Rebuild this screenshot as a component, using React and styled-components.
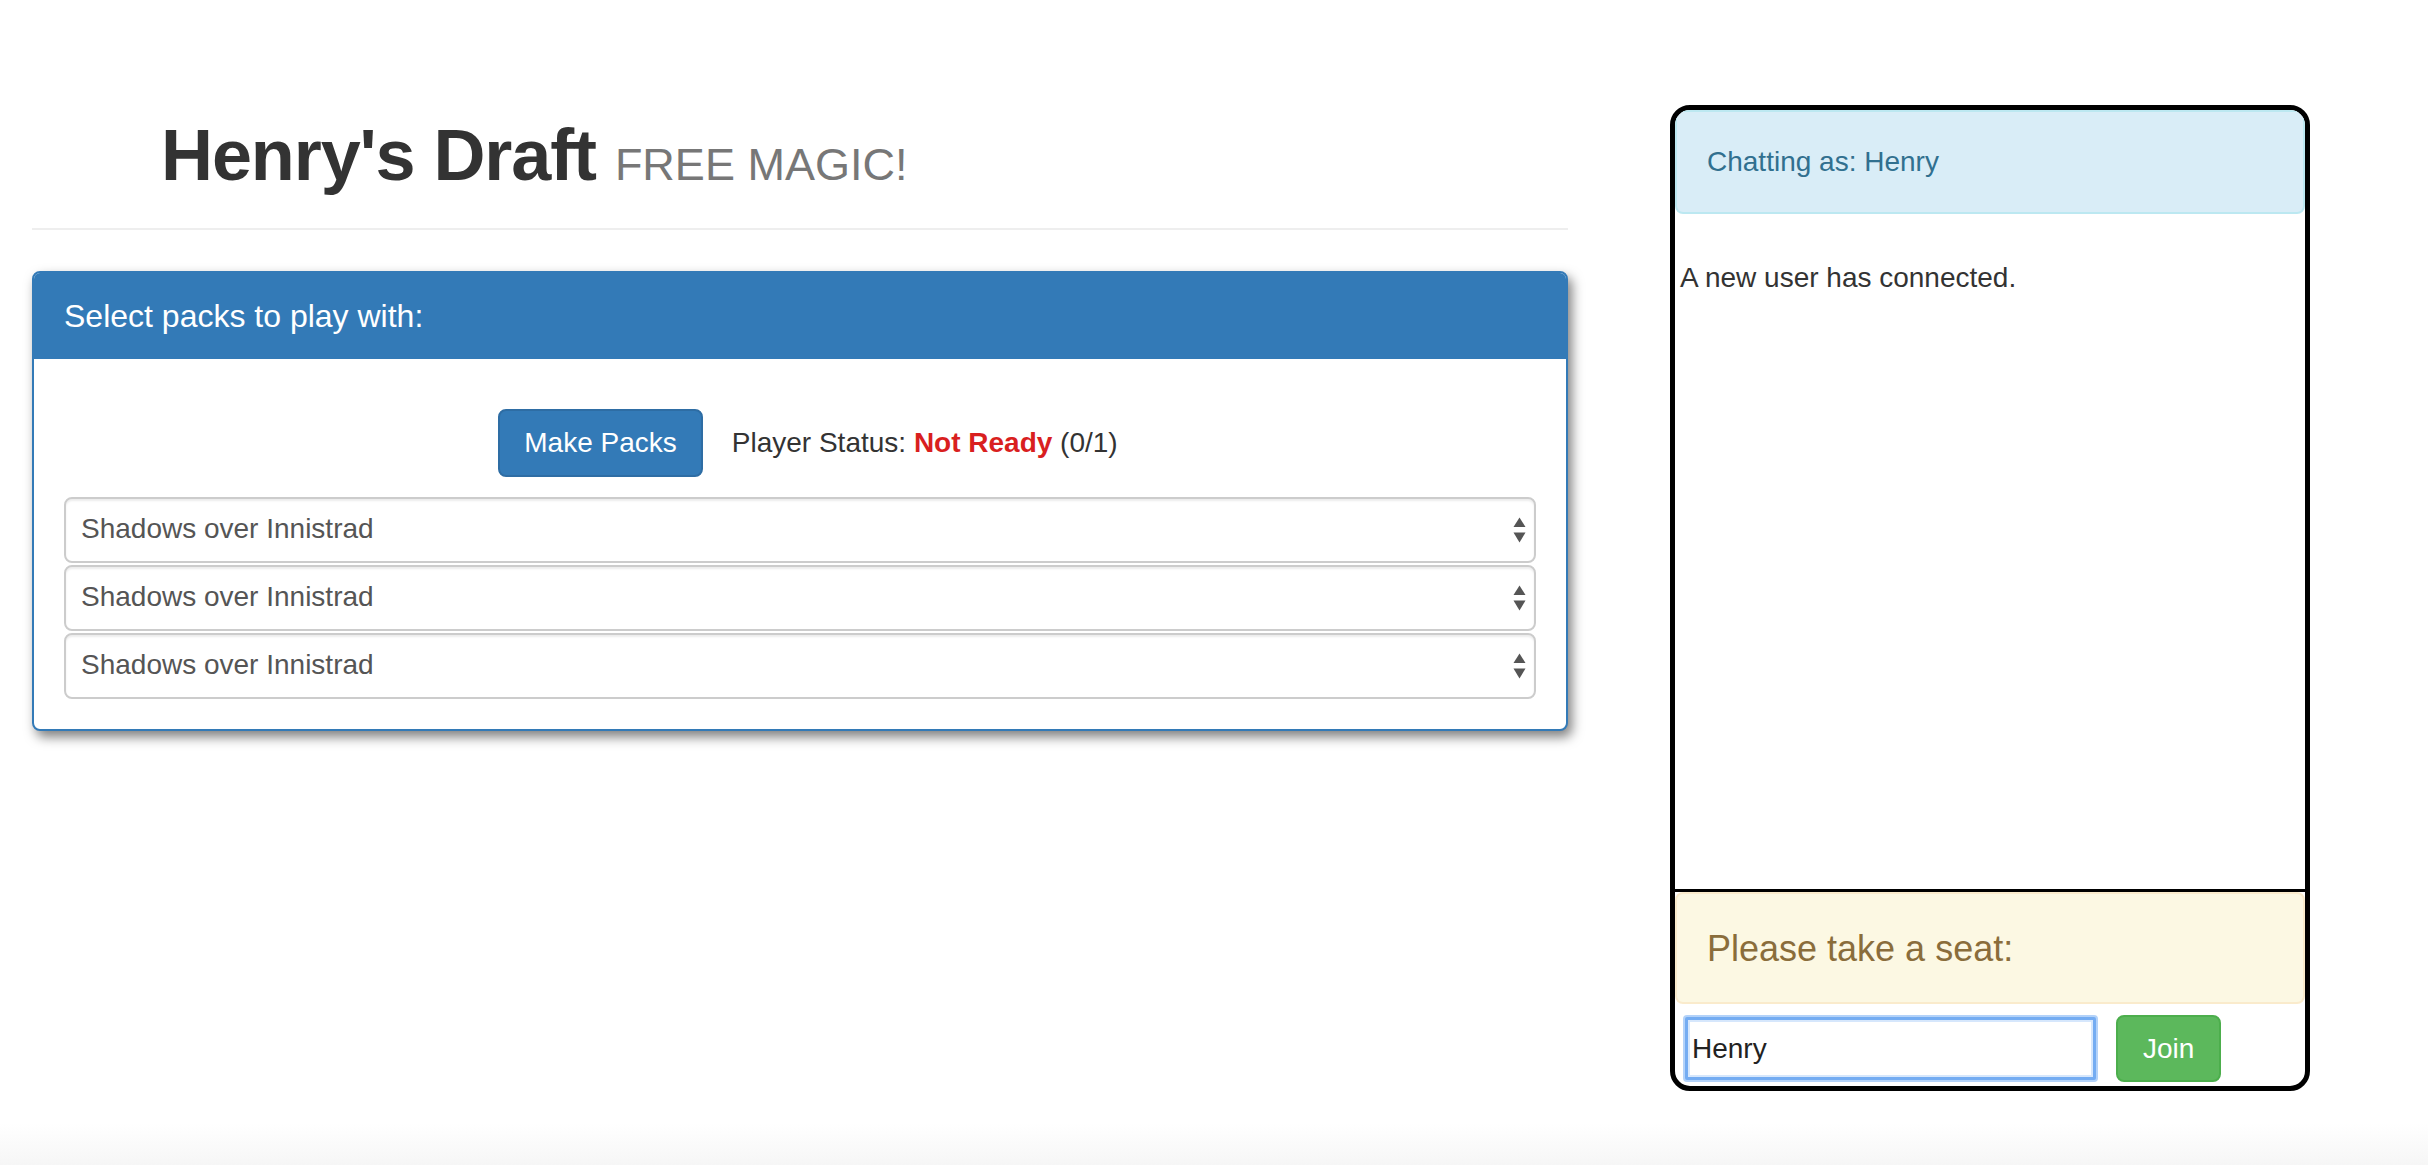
import React from 'react';
import styled, { createGlobalStyle } from 'styled-components';

const GlobalStyle = createGlobalStyle`
  * { box-sizing: border-box; }
  html {
    min-height: 100%;
    background: linear-gradient(to bottom, #ffffff 0, #ffffff calc(100% - 42px), #f6f6f6 100%);
  }
  body {
    margin: 0;
    font-family: "Liberation Sans", Arial, Helvetica, sans-serif;
    font-size: 28px;
    line-height: 40px;
    color: #333;
  }
`;

const Page = styled.div`
  display: flex;
  align-items: flex-start;
`;

const MainColumn = styled.main`
  flex: none;
  width: 1536px;
  margin-left: 32px;
`;

const PageHeader = styled.header`
  padding: 116px 0 33px 129px;
  border-bottom: 2px solid #eee;
`;

const Title = styled.h1`
  margin: 0;
  font-size: 72px;
  line-height: 1.1;
  font-weight: 700;
  letter-spacing: -1.1px;
  color: #333;
`;

const Subtitle = styled.small`
  font-size: 45px;
  font-weight: 400;
  letter-spacing: 0;
  color: #777;
`;

const Panel = styled.section`
  margin-top: 41px;
  border: 2px solid #337ab7;
  border-radius: 8px;
  background: #fff;
  overflow: hidden;
  box-shadow: 4px 6px 12px rgba(0, 0, 0, 0.5);
`;

const PanelHeading = styled.div`
  background: #337ab7;
  color: #fff;
  padding: 26px 30px 25px;
`;

const PanelTitle = styled.h3`
  margin: 0;
  font-size: 32px;
  line-height: 35px;
  font-weight: 400;
`;

const PanelBody = styled.div`
  padding: 30px;
`;

const ActionRow = styled.div`
  display: flex;
  justify-content: center;
  align-items: center;
  gap: 29px;
  margin: 20px 0;
  padding-left: 16px;
`;

const Button = styled.button`
  height: ${(p) => p.$h || 68}px;
  padding: 0 ${(p) => p.$px || 24}px;
  border: 2px solid ${(p) => p.$border};
  border-radius: 8px;
  background: ${(p) => p.$bg};
  color: #fff;
  font-family: inherit;
  font-size: 28px;
  line-height: ${(p) => (p.$h || 68) - 4}px;
  cursor: pointer;
  flex: none;
`;

const StatusText = styled.span`
  color: #333;
  white-space: nowrap;
`;

const Danger = styled.strong`
  color: #d91f1f;
  font-weight: 700;
`;

const SelectList = styled.div`
  display: flex;
  flex-direction: column;
  gap: 2px;
`;

const SelectWrap = styled.div`
  position: relative;
`;

const PackSelect = styled.select`
  appearance: none;
  -webkit-appearance: none;
  display: block;
  width: 100%;
  height: 66px;
  border: 2px solid #ccc;
  border-radius: 8px;
  padding: 0 44px 3px 15px;
  background: #fff;
  box-shadow: inset 0 2px 2px rgba(0, 0, 0, 0.075);
  font-family: inherit;
  font-size: 28px;
  color: #555;
  outline: none;
`;

const ArrowIcon = styled.svg`
  position: absolute;
  right: 10px;
  top: 50%;
  transform: translateY(-50%);
  pointer-events: none;
`;

const ChatBox = styled.aside`
  flex: none;
  margin-left: 102px;
  margin-top: 105px;
  width: 640px;
  height: 986px;
  border: 5px solid #000;
  border-radius: 20px;
  background: #fff;
  display: flex;
  flex-direction: column;
  overflow: hidden;
`;

const InfoAlert = styled.div`
  background: #d9edf7;
  border: 2px solid #bce8f1;
  border-radius: 8px;
  padding: 30px;
  color: #31708f;
`;

const Messages = styled.div`
  flex: 1;
  padding: 44px 5px 0;
  border-bottom: 3px solid #000;
  color: #333;
`;

const WarningAlert = styled.div`
  background: #fcf8e3;
  border: 2px solid #faebcc;
  border-radius: 8px;
  padding: 35px 30px 33px;
`;

const WarningTitle = styled.h4`
  margin: 0;
  font-size: 36px;
  line-height: 1.1;
  font-weight: 400;
  color: #8a6d3b;
`;

const SeatForm = styled.form`
  display: flex;
  align-items: center;
  gap: 20px;
  padding: 11px 0 4px 10px;
`;

const NameInput = styled.input`
  width: 411px;
  height: 63px;
  border: 3px solid #74acf2;
  border-radius: 2px;
  box-shadow: 0 0 0 2px #b3d2f9, inset 0 0 0 2px #d6e7fc;
  padding: 0 4px;
  font-family: inherit;
  font-size: 28px;
  color: #222;
  outline: none;
  background: #fff;
`;

const Arrows = () => (
  <ArrowIcon width="13" height="26" viewBox="0 0 13 26" aria-hidden="true">
    <polygon points="0.5,10 6.5,0.5 12.5,10" fill="#555" />
    <polygon points="0.5,15.5 12.5,15.5 6.5,25.5" fill="#555" />
  </ArrowIcon>
);

const sets = ['Shadows over Innistrad', 'Oath of the Gatewatch', 'Battle for Zendikar'];

const PackPicker = () => (
  <SelectWrap>
    <PackSelect defaultValue="Shadows over Innistrad">
      {sets.map((s) => (
        <option key={s} value={s}>{s}</option>
      ))}
    </PackSelect>
    <Arrows />
  </SelectWrap>
);

export default function App() {
  return (
    <>
      <GlobalStyle />
      <Page>
        <MainColumn>
          <PageHeader>
            <Title>
              Henry's Draft <Subtitle>FREE MAGIC!</Subtitle>
            </Title>
          </PageHeader>
          <Panel>
            <PanelHeading>
              <PanelTitle>Select packs to play with:</PanelTitle>
            </PanelHeading>
            <PanelBody>
              <ActionRow>
                <Button type="button" $bg="#337ab7" $border="#2e6da4">Make Packs</Button>
                <StatusText>
                  Player Status: <Danger>Not Ready</Danger> (0/1)
                </StatusText>
              </ActionRow>
              <SelectList>
                <PackPicker />
                <PackPicker />
                <PackPicker />
              </SelectList>
            </PanelBody>
          </Panel>
        </MainColumn>
        <ChatBox>
          <InfoAlert>Chatting as: Henry</InfoAlert>
          <Messages>A new user has connected.</Messages>
          <WarningAlert>
            <WarningTitle>Please take a seat:</WarningTitle>
          </WarningAlert>
          <SeatForm onSubmit={(e) => e.preventDefault()}>
            <NameInput type="text" defaultValue="Henry" />
            <Button type="submit" $bg="#5cb85c" $border="#4cae4c" $h={67} $px={25}>Join</Button>
          </SeatForm>
        </ChatBox>
      </Page>
    </>
  );
}
